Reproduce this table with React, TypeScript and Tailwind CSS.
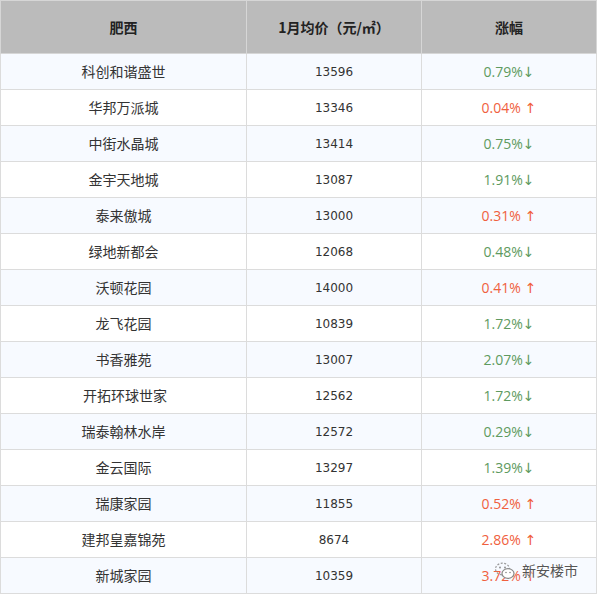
const rows: [string, string, string, boolean][] = [
  ["科创和谐盛世", "13596", "0.79%", false],
  ["华邦万派城", "13346", "0.04%", true],
  ["中街水晶城", "13414", "0.75%", false],
  ["金宇天地城", "13087", "1.91%", false],
  ["泰来傲城", "13000", "0.31%", true],
  ["绿地新都会", "12068", "0.48%", false],
  ["沃顿花园", "14000", "0.41%", true],
  ["龙飞花园", "10839", "1.72%", false],
  ["书香雅苑", "13007", "2.07%", false],
  ["\u00a0开拓环球世家", "12562", "1.72%", false],
  ["瑞泰翰林水岸", "12572", "0.29%", false],
  ["金云国际", "13297", "1.39%", false],
  ["瑞康家园", "11855", "0.52%", true],
  ["建邦皇嘉锦苑", "8674", "2.86%", true],
  ["新城家园", "10359", "3.72%", true],
];

const cjk = "font-['Noto_Sans_CJK_SC',sans-serif]";

function WeChatMark() {
  return (
    <svg width="22" height="20" viewBox="0 0 22 20" fill="none">
      <ellipse cx="8.5" cy="8" rx="7" ry="5.8" stroke="#9a9a9a" strokeWidth="1.2" strokeDasharray="2 1.5" />
      <ellipse cx="14" cy="12.5" rx="6" ry="4.8" fill="#fff" stroke="#8a8a8a" strokeWidth="1.2" />
      <circle cx="6" cy="6.5" r="0.9" fill="#888" />
      <circle cx="11" cy="6.5" r="0.9" fill="#888" />
      <circle cx="12" cy="11.5" r="0.8" fill="#888" />
      <circle cx="16" cy="11.5" r="0.8" fill="#888" />
    </svg>
  );
}

export default function App() {
  return (
    <div className="relative h-[596px] w-[597px] overflow-hidden bg-white">
      <table className="w-[596px] table-fixed border-collapse border border-[#dcdcdc] text-[#333]">
        <colgroup>
          <col className="w-[246px]" />
          <col className="w-[175px]" />
          <col className="w-[175px]" />
        </colgroup>
        <thead>
          <tr className="h-[53px] bg-[#bbbbbb]">
            <th className={`border border-[#d6d6d6] text-[14px] font-bold text-[#222] ${cjk}`}>肥西</th>
            <th className={`border border-[#d6d6d6] text-[14px] font-bold text-[#222] ${cjk}`}>1月均价（元/㎡）</th>
            <th className={`border border-[#d6d6d6] text-[14px] font-bold text-[#222] ${cjk}`}>涨幅</th>
          </tr>
        </thead>
        <tbody>
          {rows.map(([name, price, pct, up], i) => (
            <tr key={i} className={`h-[36px] ${i % 2 === 0 ? "bg-[#f7faff]" : "bg-white"}`}>
              <td className={`border border-[#dcdcdc] p-0 text-center text-[14px] ${cjk}`}>{name}</td>
              <td className="border border-[#dcdcdc] p-0 text-center font-['DejaVu_Sans',sans-serif] text-[12px] text-[#333]">
                {price}
              </td>
              <td
                className={`border border-[#dcdcdc] p-0 text-center font-['Open_Sans',sans-serif] text-[14px] ${
                  up ? "text-[#f0603e]" : "text-[#5e9a60]"
                }`}
              >
                {pct}
                <span className={`font-['DejaVu_Sans',sans-serif] text-[14px] ${up ? "ml-[4px]" : ""}`}>
                  {up ? "↑" : "↓"}
                </span>
              </td>
            </tr>
          ))}
        </tbody>
      </table>

      <div className="absolute left-[494px] top-[560px] flex items-center gap-[6px]">
        <WeChatMark />
        <span className={`text-[14px] text-[#555] [text-shadow:0_0_2px_#fff,0_0_2px_#fff] ${cjk}`}>
          新安楼市
        </span>
      </div>
    </div>
  );
}
